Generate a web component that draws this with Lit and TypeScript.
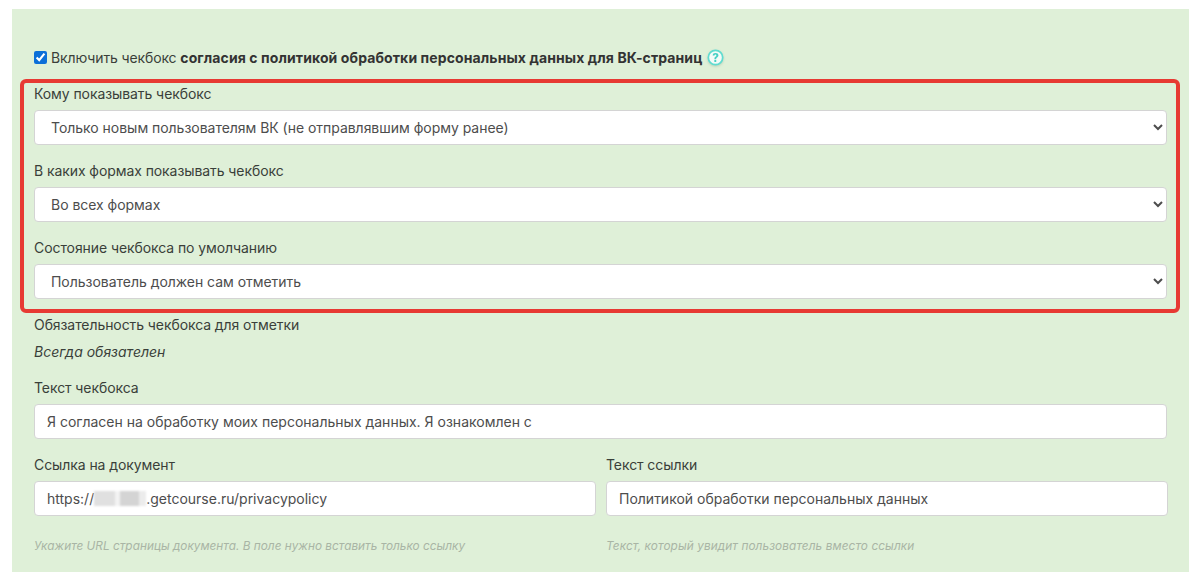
import { LitElement, html, css } from "lit";
import { customElement } from "lit/decorators.js";

@customElement("app-root")
export class AppRoot extends LitElement {
  static styles = css`
    :host {
      display: block;
      width: 1200px;
      height: 581px;
      overflow: hidden;
      background: #fff;
      font-family: Inter, "Noto Sans", sans-serif;
      font-size: 14px;
      color: #3a3f3a;
      box-sizing: border-box;
      padding: 9px 11px 9px 12px;
    }
    * { box-sizing: border-box; }
    .panel {
      height: 563px;
      background: #dff0d8;
      padding: 36px 22px 0 22px;
      display: flex;
      flex-direction: column;
    }
    .enable {
      display: flex;
      align-items: center;
      height: 24px;
      gap: 4px;
      margin-bottom: 12px;
      letter-spacing: -0.12px;
    }
    .enable input {
      width: 13px;
      height: 13px;
      margin: 0;
      accent-color: #0b6fd8;
    }
    .enable b { font-weight: 700; color: #333; letter-spacing: 0.1px; }
    .help {
      width: 17px;
      height: 17px;
      margin-left: 1px;
      flex: none;
      filter: drop-shadow(0 1px 1px rgba(80, 120, 100, 0.25));
    }
    .group {
      position: relative;
      display: flex;
      flex-direction: column;
      gap: 13px;
    }
    .group::after {
      content: "";
      position: absolute;
      left: -14px;
      right: -13px;
      top: -2px;
      bottom: -14px;
      border: 4px solid #e73a33;
      border-radius: 6px;
      pointer-events: none;
    }
    .field { display: flex; flex-direction: column; }
    .lbl {
      display: block;
      height: 24px;
      line-height: 24px;
      letter-spacing: -0.08px;
    }
    .group .lbl, .text-label { line-height: 26px; }
    select, input.text, .text {
      display: block;
      width: 100%;
      height: 35px;
      border: 1px solid #d4d4d4;
      border-radius: 4px;
      background: #fff;
      font: inherit;
      color: #4d4d4d;
      outline: none;
      margin: 0;
    }
    select { padding: 0 8px 0 12px; margin-top: 5px; letter-spacing: -0.03px; }
    input.text, .text { padding: 0 12px; line-height: 33px; }
    .required { margin-top: 14px; }
    .always {
      font-style: italic;
      margin-top: 2px;
      height: 24px;
      line-height: 26px;
    }
    .text-label { margin-top: 12px; margin-bottom: 5px; }
    .row {
      display: grid;
      grid-template-columns: 562px 562px;
      column-gap: 10px;
      margin-top: 14px;
    }
    .row .lbl { margin-bottom: 4px; }
    .redact {
      display: inline-block;
      width: 52px;
      height: 15px;
      vertical-align: -2px;
      background: linear-gradient(90deg, #e0e0e0 0 40%, #f3f3f3 40% 50%, #d4d4d4 50% 86%, #ececec 86%);
      filter: blur(1px);
    }
    .hint {
      font-style: italic;
      font-size: 11.8px;
      color: #a9b5a5;
      margin-top: 16px;
      line-height: 28px;
    }
    .hint.wide { letter-spacing: 0.1px; }
  `;

  render() {
    return html`
      <div class="panel">
        <div class="enable">
          <input type="checkbox" checked />
          <span>Включить чекбокс <b>согласия с политикой обработки персональных данных для ВК-страниц</b></span>
          <svg class="help" viewBox="0 0 17 17">
            <circle cx="8.5" cy="8.5" r="7.2" fill="#f4fbf8" stroke="#5fdcd0" stroke-width="1.7"></circle>
            <text x="8.5" y="12.5" text-anchor="middle" font-family="Inter, sans-serif" font-size="11.5" font-weight="800" fill="#45d0c4">?</text>
          </svg>
        </div>
        <div class="group">
          <div class="field">
            <div class="lbl">Кому показывать чекбокс</div>
            <select><option>Только новым пользователям ВК (не отправлявшим форму ранее)</option></select>
          </div>
          <div class="field">
            <div class="lbl">В каких формах показывать чекбокс</div>
            <select><option>Во всех формах</option></select>
          </div>
          <div class="field">
            <div class="lbl">Состояние чекбокса по умолчанию</div>
            <select><option>Пользователь должен сам отметить</option></select>
          </div>
        </div>
        <div class="lbl required">Обязательность чекбокса для отметки</div>
        <div class="always">Всегда обязателен</div>
        <div class="lbl text-label">Текст чекбокса</div>
        <input class="text" value="Я согласен на обработку моих персональных данных. Я ознакомлен с" />
        <div class="row">
          <div class="field">
            <div class="lbl">Ссылка на документ</div>
            <div class="text">https://<span class="redact"></span>.getcourse.ru/privacypolicy</div>
            <div class="hint">Укажите URL страницы документа. В поле нужно вставить только ссылку</div>
          </div>
          <div class="field">
            <div class="lbl">Текст ссылки</div>
            <input class="text" value="Политикой обработки персональных данных" />
            <div class="hint wide">Текст, который увидит пользователь вместо ссылки</div>
          </div>
        </div>
      </div>
    `;
  }
}
